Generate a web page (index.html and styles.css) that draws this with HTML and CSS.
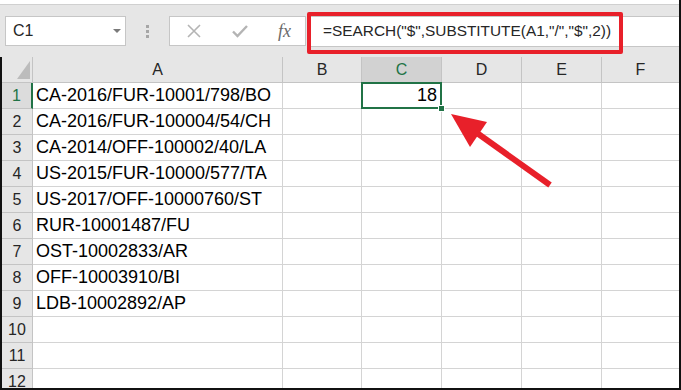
FILE: index.html
```html
<!DOCTYPE html>
<html lang="en">

<head>
    <meta charset="UTF-8">
    <meta name="viewport" content="width=device-width, initial-scale=1.0">
    <title>Sheet</title>
    <link rel="stylesheet" href="styles.css">
</head>

<body>
    <div class="top-strip"></div>
    <header class="formula-bar">
        <div class="name-box">
            <span class="name-text">C1</span>
            <span class="name-arrow"></span>
        </div>
        <div class="grip">
            <span></span><span></span><span></span>
        </div>
        <div class="fx-buttons">
            <svg class="btn-icon" width="16" height="16" viewBox="0 0 16 16">
                <path d="M2 2 L14 14 M14 2 L2 14" stroke="#b4b4b4" stroke-width="1.6" fill="none" />
            </svg>
            <svg class="btn-icon" width="18" height="16" viewBox="0 0 18 16">
                <path d="M2 8.5 L6.5 13 L16 3" stroke="#b4b4b4" stroke-width="2.4" fill="none" />
            </svg>
            <span class="fx-label">fx</span>
        </div>
        <div class="formula-field">
            <span class="formula-text">=SEARCH("$",SUBSTITUTE(A1,"/","$",2))</span>
            <div class="callout-box"></div>
        </div>
    </header>

    <main class="sheet">
        <div class="row head-row">
            <div class="corner"><span class="corner-tri"></span></div>
            <div class="col-head">A</div>
            <div class="col-head">B</div>
            <div class="col-head active">C</div>
            <div class="col-head">D</div>
            <div class="col-head">E</div>
            <div class="col-head last">F</div>
        </div>
        <div class="row">
            <div class="row-head active">1</div>
            <div class="cell">CA-2016/FUR-10001/798/BO</div>
            <div class="cell"></div>
            <div class="cell num selected">18<span class="fill-handle"></span></div>
            <div class="cell"></div>
            <div class="cell"></div>
            <div class="cell last"></div>
        </div>
        <div class="row">
            <div class="row-head">2</div>
            <div class="cell">CA-2016/FUR-100004/54/CH</div>
            <div class="cell"></div><div class="cell"></div><div class="cell"></div><div class="cell"></div><div class="cell last"></div>
        </div>
        <div class="row">
            <div class="row-head">3</div>
            <div class="cell">CA-2014/OFF-100002/40/LA</div>
            <div class="cell"></div><div class="cell"></div><div class="cell"></div><div class="cell"></div><div class="cell last"></div>
        </div>
        <div class="row">
            <div class="row-head">4</div>
            <div class="cell">US-2015/FUR-10000/577/TA</div>
            <div class="cell"></div><div class="cell"></div><div class="cell"></div><div class="cell"></div><div class="cell last"></div>
        </div>
        <div class="row">
            <div class="row-head">5</div>
            <div class="cell">US-2017/OFF-10000760/ST</div>
            <div class="cell"></div><div class="cell"></div><div class="cell"></div><div class="cell"></div><div class="cell last"></div>
        </div>
        <div class="row">
            <div class="row-head">6</div>
            <div class="cell">RUR-10001487/FU</div>
            <div class="cell"></div><div class="cell"></div><div class="cell"></div><div class="cell"></div><div class="cell last"></div>
        </div>
        <div class="row">
            <div class="row-head">7</div>
            <div class="cell">OST-10002833/AR</div>
            <div class="cell"></div><div class="cell"></div><div class="cell"></div><div class="cell"></div><div class="cell last"></div>
        </div>
        <div class="row">
            <div class="row-head">8</div>
            <div class="cell">OFF-10003910/BI</div>
            <div class="cell"></div><div class="cell"></div><div class="cell"></div><div class="cell"></div><div class="cell last"></div>
        </div>
        <div class="row">
            <div class="row-head">9</div>
            <div class="cell">LDB-10002892/AP</div>
            <div class="cell"></div><div class="cell"></div><div class="cell"></div><div class="cell"></div><div class="cell last"></div>
        </div>
        <div class="row">
            <div class="row-head">10</div>
            <div class="cell"></div><div class="cell"></div><div class="cell"></div><div class="cell"></div><div class="cell"></div><div class="cell last"></div>
        </div>
        <div class="row">
            <div class="row-head">11</div>
            <div class="cell"></div><div class="cell"></div><div class="cell"></div><div class="cell"></div><div class="cell"></div><div class="cell last"></div>
        </div>
        <div class="row">
            <div class="row-head">12</div>
            <div class="cell"></div><div class="cell"></div><div class="cell"></div><div class="cell"></div><div class="cell"></div><div class="cell last"></div>
        </div>
    </main>

    <!-- annotation arrow pointing at C1 -->
    <svg class="arrow" width="681" height="390" viewBox="0 0 681 390">
        <line x1="477" y1="133" x2="550" y2="185" stroke="#e8202a" stroke-width="6" />
        <polygon points="451,114 487,122 470,147" fill="#e8202a" />
    </svg>
</body>

</html>
```

FILE: styles.css
```css
* {
    box-sizing: border-box;
}

body {
    margin: 0;
    padding: 0;
    width: 681px;
    height: 390px;
    overflow: hidden;
    position: relative;
    background-color: #ffffff;
    border-right: 2px solid #111111;
    border-bottom: 2px solid #111111;
    font-family: "Liberation Sans", Arial, sans-serif;
}

.top-strip {
    height: 5px;
    background-color: #ffffff;
    border-bottom: 1px solid #d0d0d0;
}

.formula-bar {
    height: 52px;
    display: flex;
    align-items: center;
    padding-left: 5px;
    background-color: #e6e6e6;
}

.name-box {
    width: 121px;
    height: 30px;
    display: flex;
    align-items: center;
    justify-content: space-between;
    padding: 0 4px 0 7px;
    background-color: #ffffff;
    border: 1px solid #c6c6c6;
}

.name-text {
    font-size: 16px;
    color: #262626;
}

.name-arrow {
    width: 0;
    height: 0;
    border-left: 4px solid transparent;
    border-right: 4px solid transparent;
    border-top: 4px solid #7a7a7a;
}

.grip {
    width: 43px;
    display: flex;
    flex-direction: column;
    align-items: center;
    gap: 2px;
}

.grip span {
    width: 3px;
    height: 3px;
    background-color: #a6a6a6;
}

.fx-buttons {
    width: 137px;
    height: 30px;
    display: flex;
    align-items: center;
    justify-content: space-between;
    padding: 0 14px 0 16px;
    background-color: #ffffff;
    border: 1px solid #c6c6c6;
}

.fx-label {
    font-family: "Liberation Serif", "Times New Roman", serif;
    font-style: italic;
    font-size: 18px;
    color: #6a6a6a;
}

.formula-field {
    flex-grow: 1;
    height: 31px;
    margin-left: 4px;
    position: relative;
    display: flex;
    align-items: center;
    padding-left: 13px;
    background-color: #ffffff;
    border-top: 1px solid #c6c6c6;
    border-bottom: 1px solid #c6c6c6;
}

.formula-text {
    font-size: 15.4px;
    color: #262626;
    white-space: nowrap;
}

.callout-box {
    position: absolute;
    left: -3px;
    top: -5px;
    width: 316px;
    height: 42px;
    border: 4px solid #e8202a;
    border-radius: 2px;
}

.sheet {
    border-left: 2px solid #111111;
}

.row {
    display: grid;
    grid-template-columns: 31px 250px 79px 80px 80px 80px 1fr;
    height: 26px;
}

.head-row {
    background-color: #e6e6e6;
}

.corner,
.col-head,
.row-head {
    display: flex;
    align-items: center;
    justify-content: center;
    font-size: 16px;
    color: #262626;
    background-color: #e6e6e6;
    border-right: 1px solid #c4c4c4;
    border-bottom: 1px solid #c4c4c4;
}

.col-head.last {
    border-right: none;
}

.corner {
    position: relative;
}

.corner-tri {
    position: absolute;
    right: 2px;
    bottom: 3px;
    width: 0;
    height: 0;
    border-left: 13px solid transparent;
    border-bottom: 18px solid #bcbcbc;
}

.col-head.active {
    background-color: #d2d2d2;
    color: #217346;
}

.row-head.active {
    background-color: #dcdcdc;
    color: #217346;
    border-right: 2px solid #217346;
}

.cell {
    display: flex;
    align-items: center;
    padding-left: 3px;
    font-size: 18px;
    color: #000000;
    white-space: nowrap;
    border-right: 1px solid #d4d4d4;
    border-bottom: 1px solid #d4d4d4;
}

.cell.last {
    border-right: none;
}

.cell.num {
    justify-content: flex-end;
    padding-right: 3px;
}

.cell.selected {
    position: relative;
    margin: -1px 0 0 -1px;
    border: 2px solid #217346;
    height: 27px;
}

.fill-handle {
    position: absolute;
    right: -5px;
    bottom: -5px;
    width: 7px;
    height: 7px;
    background-color: #217346;
    border: 1px solid #ffffff;
}

.arrow {
    position: absolute;
    left: 0;
    top: 0;
    pointer-events: none;
}
```
